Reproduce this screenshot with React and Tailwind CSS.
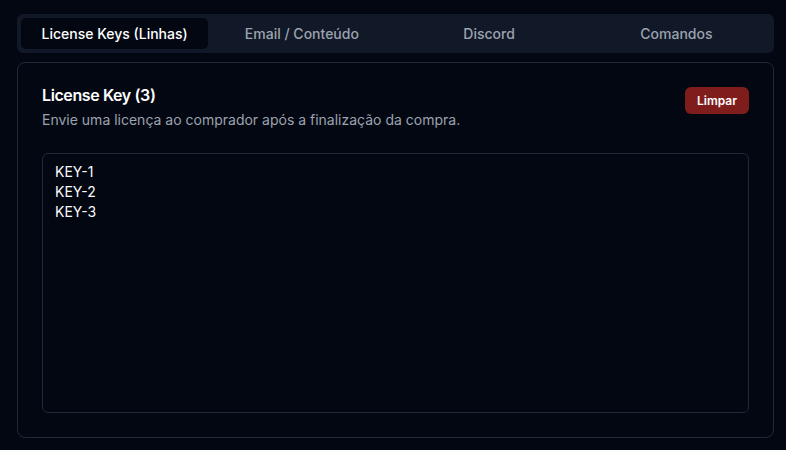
import { useState } from 'react'

const tabs = ['License Keys (Linhas)', 'Email / Conteúdo', 'Discord', 'Comandos']

function App() {
  const [active, setActive] = useState(0)
  const [keys, setKeys] = useState('KEY-1\nKEY-2\nKEY-3')
  const count = keys.split('\n').filter((k) => k.trim()).length

  return (
    <div className="min-h-screen bg-[#030712] pt-[14px] pl-[17px] pr-[12px] font-['Inter',sans-serif] text-gray-50">
      {/* Tabs */}
      <div className="grid h-[39px] grid-cols-4 rounded-md bg-[#111827] p-1">
        {tabs.map((tab, i) => (
          <button
            key={tab}
            onClick={() => setActive(i)}
            className={`rounded-[5px] text-sm font-medium ${
              active === i ? 'bg-[#030712] text-white' : 'text-[#9ca3af]'
            }`}
          >
            {tab}
          </button>
        ))}
      </div>

      {/* Card */}
      <div className="mt-[9px] h-[376px] rounded-lg border border-[#1f2937] p-6 flex flex-col">
        <div className="flex items-start justify-between">
          <div>
            <h2 className="text-base font-semibold leading-none tracking-tight text-white">License Key ({count})</h2>
            <p className="mt-[7px] text-sm leading-5 text-[#9ca3af]">Envie uma licença ao comprador após a finalização da compra.</p>
          </div>
          <button
            onClick={() => setKeys('')}
            className="h-[27px] rounded-md bg-[#7f1d1d] px-3 text-xs font-semibold text-white"
          >
            Limpar
          </button>
        </div>

        <textarea
          value={keys}
          onChange={(e) => setKeys(e.target.value)}
          className="mt-[23px] flex-1 resize-none rounded-md border border-[#1f2937] bg-[#030712] px-3 py-2 text-sm leading-5 text-gray-50 outline-none"
        />
      </div>
    </div>
  )
}

export default App
